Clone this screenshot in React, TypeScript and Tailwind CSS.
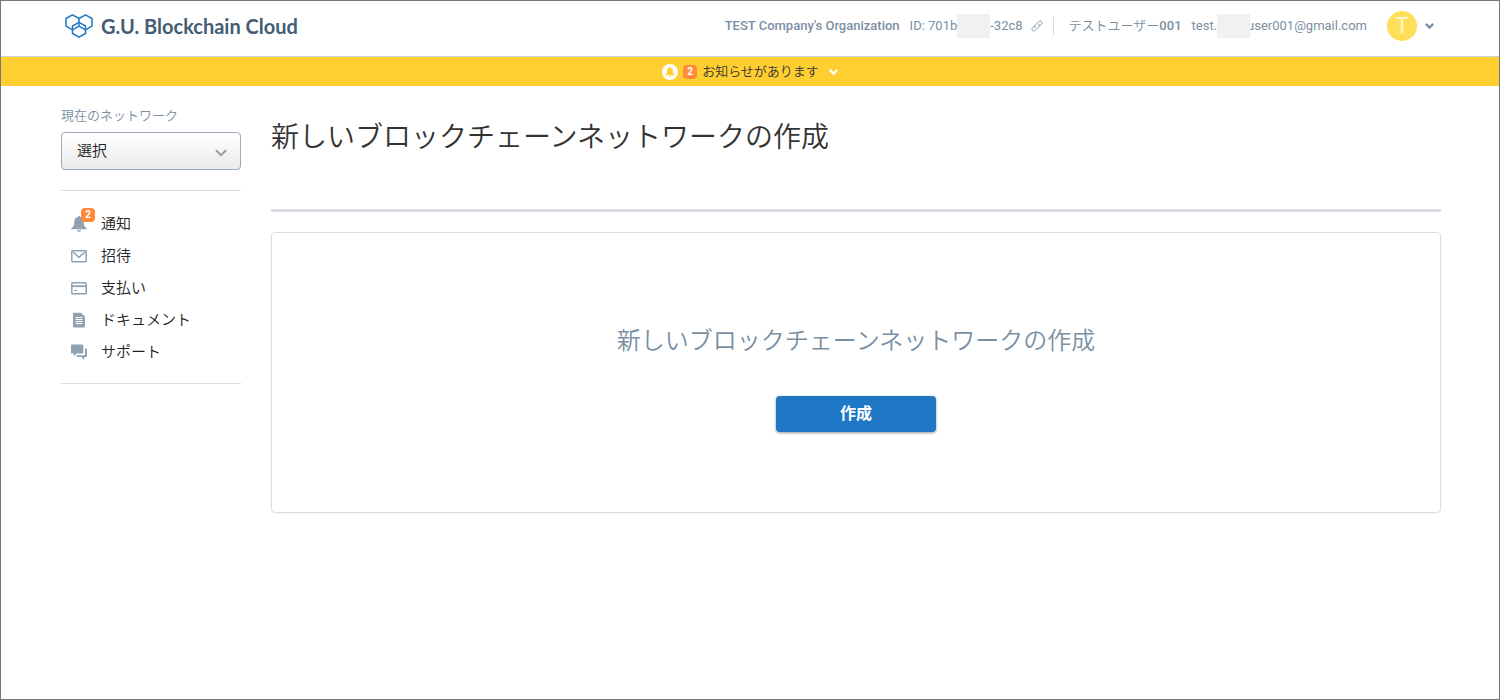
import type { ReactNode } from "react";

const BellIcon = () => (
  <svg className="h-4 w-4" viewBox="0 0 16 16" fill="currentColor" aria-hidden="true">
    <path d="M8 0c-.7 0-1.100.4-1.200 1C4.600 1.500 3.300 3.400 3.300 5.800c0 3.600-.8 5.400-3.200 6.600v.8h15.800v-.8c-2.400-1.200-3.200-3-3.200-6.600 0-2.400-1.300-4.300-3.500-4.800C9.100.4 8.700 0 8 0zM6 14.200c.2 1 1 1.600 2 1.600s1.800-.6 2-1.600z" />
  </svg>
);

const MailIcon = () => (
  <svg className="h-4 w-4" viewBox="0 0 16 16" fill="none" stroke="currentColor" strokeWidth="1.500" aria-hidden="true">
    <rect x=".8" y="2.800" width="14.400" height="10.900" rx=".6" />
    <path d="M2 4l6 5.200L14 4" />
  </svg>
);

const CardIcon = () => (
  <svg className="h-4 w-4" viewBox="0 0 16 16" fill="none" stroke="currentColor" strokeWidth="1.500" aria-hidden="true">
    <rect x=".8" y="2.800" width="14.400" height="10.900" rx=".8" />
    <path d="M1 6.200h14" strokeWidth="1.800" />
    <path d="M3 10.500h3" strokeWidth="1" />
  </svg>
);

const DocumentIcon = () => (
  <svg className="h-4 w-4" viewBox="0 0 16 16" aria-hidden="true">
    <path d="M2 1.600C2 1.100 2.300.8 2.800.8H10l4 4v9.900c0 .5-.3.800-.8.800H2.800c-.5 0-.8-.3-.8-.8z" fill="currentColor" />
    <path d="M4.500 5.500h7M4.500 7.500h7M4.500 9.500h7M4.500 11.500h7" stroke="#fff" strokeWidth="1" />
  </svg>
);

const ChatIcon = () => (
  <svg className="h-4 w-4" viewBox="0 0 16 16" fill="currentColor" aria-hidden="true">
    <path d="M.8.5h10.700c.5 0 .8.300.8.800v7.400c0 .5-.3.800-.8.800H5.600L2.800 12.300V9.500h-2C.3 9.500 0 9.200 0 8.700V1.300C0 .8.300.5.800.5z" />
    <path d="M14 4.500h1.200c.5 0 .8.300.8.800v6.900c0 .5-.3.800-.8.800h-1.900v2.900L10.400 13H6.300c-.5 0-.8-.3-.8-.8v-1h7.700c.5 0 .8-.3.800-.8z" />
  </svg>
);

const Chevron = ({ className }: { className: string }) => (
  <svg className={className} viewBox="0 0 12 8" fill="none" stroke="currentColor" aria-hidden="true">
    <path d="M1 1.200l5 5 5-5" />
  </svg>
);

const LinkIcon = () => (
  <svg className="h-3 w-3" viewBox="0 0 12 12" fill="none" stroke="currentColor" strokeWidth=".9" strokeLinecap="round" aria-hidden="true">
    <path d="M4.300 7.700c-.9-.9-.8-1.800 0-2.600l3.500-3.500c.8-.8 1.900-.9 2.700-.1.800.8.700 1.900-.1 2.700L8.300 6.300" />
    <path d="M7.700 4.300c.9.900.8 1.800 0 2.600l-3.500 3.500c-.8.800-1.900.9-2.700.1-.8-.8-.7-1.900.1-2.700l2.100-2.100" />
  </svg>
);

const Logo = () => (
  <svg className="h-6 w-7" viewBox="0 0 28 24" fill="none" stroke="#1e78c5" strokeWidth="1.500" strokeLinejoin="round" aria-hidden="true">
    <path d="M14 4.500L7.500.8 1 4.500v7.600l6.500 3.700" />
    <path d="M14 4.500L20.500.8 27 4.500v7.600l-6.500 3.700" />
    <path d="M14 4.500v7.600M7.500 15.800l6.500-3.700 6.500 3.700" />
    <path d="M14 8.300l6.500 3.700v7.500L14 23.200l-6.500-3.700V12z" />
  </svg>
);

const Badge = ({ children }: { children: ReactNode }) => (
  <span className="flex h-[14px] w-[14px] items-center justify-center rounded-[4px] bg-[#ff8a3c] text-[10px] font-bold leading-none text-white">
    {children}
  </span>
);

const Masked = () => (
  <span className="relative inline-block h-6 w-[33px] bg-[#f0f1f3]" />
);

const NAV = [
  { label: "通知", icon: <BellIcon />, count: 2 },
  { label: "招待", icon: <MailIcon /> },
  { label: "支払い", icon: <CardIcon /> },
  { label: "ドキュメント", icon: <DocumentIcon /> },
  { label: "サポート", icon: <ChatIcon /> },
];

function Header() {
  return (
    <header className="flex h-14 items-center justify-between border-b border-[#cdd3d9] pb-[5px] pl-16 pr-[65px] text-[13px] font-normal text-[#7b8fa3]">
      <a href="#" className="flex items-center gap-2">
        <Logo />
        <span className="font-[Lato] text-[20px] font-bold leading-6 text-[#445d74]">
          G.U. Blockchain Cloud
        </span>
      </a>
      <div className="flex items-center whitespace-nowrap">
        <span className="font-medium">TEST Company's Organization</span>
        <span className="ml-[10px] flex items-center">
          ID: 701b
          <Masked />
          -32c8
        </span>
        <button type="button" aria-label="リンクをコピー" className="ml-2">
          <LinkIcon />
        </button>
        <span className="ml-[10px] h-[18px] w-px bg-[#d5dbe0]" />
        <span className="ml-[15px]">
          <span className="font-[350]">テストユーザー</span>
          <span className="font-medium">001</span>
        </span>
        <span className="ml-[10px] flex items-center">
          test.
          <Masked />
          <span className="-ml-[3px]">user001@gmail.com</span>
        </span>
        <button type="button" aria-label="アカウント" className="ml-5 flex items-center gap-2">
          <span className="flex h-[30px] w-[30px] items-center justify-center rounded-full bg-[#ffde59] text-[22px] leading-none text-[#fff6cf]">
            T
          </span>
          <Chevron className="h-[6px] w-[9px] stroke-3" />
        </button>
      </div>
    </header>
  );
}

function Notice() {
  return (
    <button
      type="button"
      className="flex h-[29px] w-full items-center justify-center bg-[#ffce30] text-[13px] text-[#333]"
    >
      <span className="mr-[5px] flex h-4 w-4 items-center justify-center rounded-full bg-white text-[#ffce30]">
        <span className="flex h-[10px] w-[10px] items-center *:h-[10px] *:w-[10px]">
          <BellIcon />
        </span>
      </span>
      <Badge>2</Badge>
      <span className="ml-[5px]">お知らせがあります</span>
      <Chevron className="ml-[10px] h-[6px] w-[9px] stroke-3 text-white" />
    </button>
  );
}

function Sidebar() {
  return (
    <aside className="w-[180px] shrink-0">
      <label htmlFor="network" className="block pt-px text-[13px] leading-5 text-[#7b8fa3]">
        現在のネットワーク
      </label>
      <div className="relative mt-[6px]">
        <select
          id="network"
          className="block h-[38px] w-full appearance-none rounded-[4px] border border-[#9aabbb] bg-linear-to-b from-white to-[#ebebeb] px-[15px] text-[15px] text-[#222]"
        >
          <option>選択</option>
        </select>
        <Chevron className="pointer-events-none absolute right-[14px] top-[17px] h-2 w-3 stroke-2 text-[#929da8]" />
      </div>
      <nav className="mt-5 border-y border-[#d8dee3] pb-[15px] pt-[17px]">
        {NAV.map((item) => (
          <a
            key={item.label}
            href="#"
            className="flex h-8 items-center gap-[14px] pl-[10px] text-[15px] text-[#222]"
          >
            <span className="relative text-[#8ea2b4]">
              {item.icon}
              {item.count && (
                <span className="absolute -top-2 left-[10px]">
                  <Badge>{item.count}</Badge>
                </span>
              )}
            </span>
            {item.label}
          </a>
        ))}
      </nav>
    </aside>
  );
}

export default function App() {
  return (
    <div className="min-h-screen border border-[#777] bg-white font-[Roboto,'Noto_Sans_CJK_JP',sans-serif] font-[350]">
      <Header />
      <Notice />
      <div className="flex gap-[30px] pl-[60px] pr-[58px] pt-[19px]">
        <Sidebar />
        <main className="min-w-0 flex-1">
          <h1 className="border-b-[3px] border-[#d8dee3] pb-[51px] pt-[13px] text-[28px] font-[350] leading-10 text-[#333]">
            新しいブロックチェーンネットワークの作成
          </h1>
          <section className="mt-5 flex flex-col items-center rounded-[4px] border border-[#d8dee3] pb-20 pt-[90px] shadow-xs">
            <h2 className="text-[24px] font-[350] leading-9 text-[#7b8fa3]">
              新しいブロックチェーンネットワークの作成
            </h2>
            <button
              type="button"
              className="mt-[37px] h-9 w-40 rounded-[4px] bg-[#1e78c5] text-[16px] font-bold text-white shadow-[0_1px_3px_rgba(0,0,0,0.4)]"
            >
              作成
            </button>
          </section>
        </main>
      </div>
    </div>
  );
}
